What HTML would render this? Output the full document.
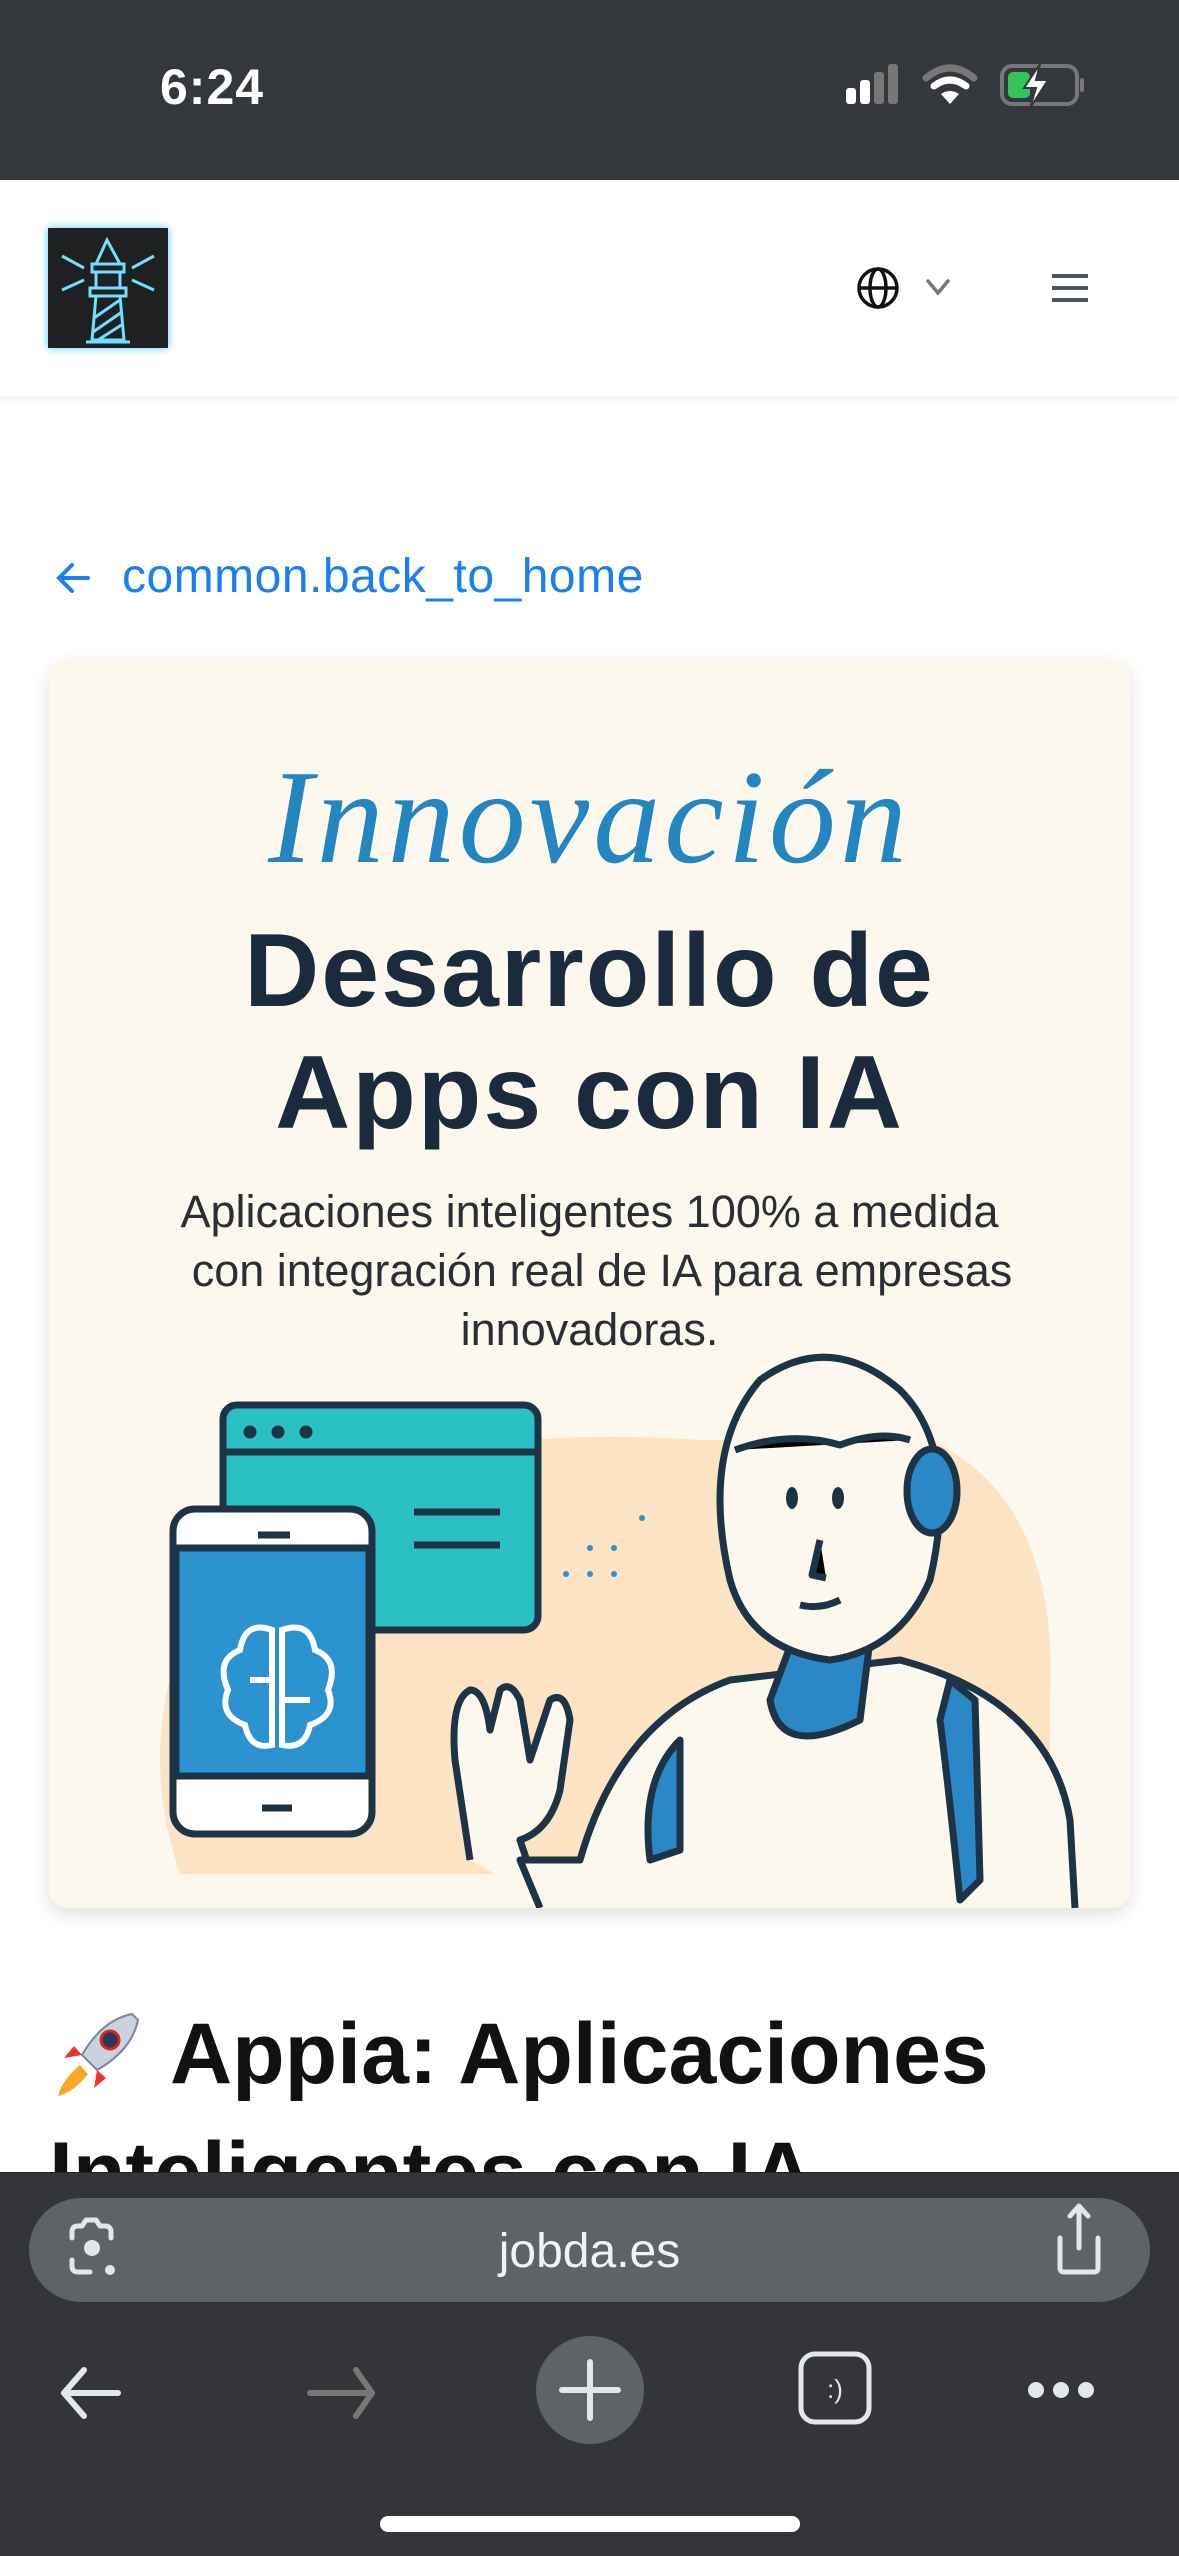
<!DOCTYPE html>
<html><head><meta charset="utf-8">
<style>
*{margin:0;padding:0;box-sizing:border-box}
html,body{width:1179px;height:2556px;overflow:hidden;background:#fff;font-family:"Liberation Sans",sans-serif;position:relative}
.abs{position:absolute}
.status{left:0;top:0;width:1179px;height:180px;background:#34373b}
.time{left:160px;top:58px;color:#fff;font-size:50px;font-weight:bold;letter-spacing:1px}
.header{left:0;top:180px;width:1179px;height:216px;background:#fff;box-shadow:0 3px 6px rgba(0,0,0,0.06)}
.back{left:122px;top:549px;color:#1a7ff0;font-size:48px;letter-spacing:0.5px}
.card{left:49px;top:660px;width:1081px;height:1248px;background:#fdf8ee;border-radius:18px;box-shadow:0 6px 18px rgba(0,0,0,0.13);overflow:hidden}
.ct{position:absolute;width:100%;text-align:center;left:0}
.title{left:170px;top:2005px;font-size:86px;font-weight:bold;color:#111;white-space:nowrap}
.title2{left:49px;top:2124px;font-size:86px;font-weight:bold;color:#111;white-space:nowrap}
.bottom{left:0;top:2172px;width:1179px;height:384px;background:#333538;border-top:1px solid #222}
.pill{left:29px;top:2198px;width:1121px;height:104px;background:#5e6368;border-radius:52px}
.url{left:0;top:2224px;width:1179px;text-align:center;color:#f2f2f2;font-size:48px}
.home{left:380px;top:2516px;width:420px;height:16px;background:#fff;border-radius:8px}
</style></head><body>
<div class="abs status"></div>
<div class="abs time">6:24</div>
<svg class="abs" style="left:840px;top:62px" width="250" height="50" viewBox="0 0 250 50">
<rect x="6" y="26" width="10" height="16" rx="3" fill="#fff"/>
<rect x="20" y="18" width="10" height="24" rx="3" fill="#fff"/>
<rect x="34" y="10" width="10" height="32" rx="3" fill="#777"/>
<rect x="48" y="2" width="10" height="40" rx="3" fill="#777"/>
<path d="M86 16 Q110 -4 134 16" stroke="#777" stroke-width="7" fill="none" stroke-linecap="round"/>
<path d="M94 24 Q110 12 126 24" stroke="#fff" stroke-width="7" fill="none" stroke-linecap="round"/>
<path d="M101 32 L110 42 L119 32 Q110 26 101 32Z" fill="#fff"/>
<rect x="162" y="4" width="75" height="38" rx="10" fill="none" stroke="#777" stroke-width="4"/>
<rect x="168" y="10" width="22" height="26" rx="5" fill="#33c55a"/>
<rect x="240" y="16" width="4" height="14" rx="2" fill="#777"/>
<path d="M200 2 L184 26 L196 26 L190 46 L208 18 L196 18 Z" fill="#fff" stroke="#34373b" stroke-width="2"/>
</svg>
<div class="abs header"></div>
<div class="abs" style="left:48px;top:228px;width:120px;height:120px;background:#1f2022;box-shadow:0 0 8px #4cc9ff"></div>
<svg class="abs" style="left:48px;top:228px" width="120" height="120" viewBox="0 0 120 120" fill="none" stroke="#6fe0ff" stroke-width="3">
<path d="M48 36 L59 12 L72 36 Z"/><rect x="44" y="36" width="32" height="8"/><rect x="48" y="44" width="24" height="16"/><rect x="42" y="60" width="36" height="8"/>
<path d="M48 68 L44 112 L76 112 L72 68"/><path d="M38 114 H82"/><path d="M46 90 L72 72 M45 104 L74 84 M50 112 L75 96"/>
<path d="M36 40 L14 28 M36 52 L14 62 M84 40 L106 28 M84 52 L106 62"/>
</svg>
<svg class="abs" style="left:852px;top:264px" width="240" height="48" viewBox="0 0 240 48" fill="none">
<circle cx="26" cy="24" r="19" stroke="#111" stroke-width="3.5"/>
<ellipse cx="26" cy="24" rx="8" ry="19" stroke="#111" stroke-width="3.5"/>
<path d="M7 24 H45" stroke="#111" stroke-width="3.5"/>
<path d="M76 17 L86 29 L96 17" stroke="#777" stroke-width="3.5" stroke-linecap="round"/>
<path d="M200 12 H236 M200 24 H236 M200 36 H236" stroke="#4a5560" stroke-width="4"/>
</svg>
<svg class="abs" style="left:54px;top:560px" width="40" height="36" viewBox="0 0 40 36" fill="none" stroke="#1a7ff0" stroke-width="4" stroke-linecap="round"><path d="M34 18 H6 M18 5 L5 18 L18 31"/></svg>
<div class="abs back">common.back_to_home</div>
<div class="abs card">
<div class="ct" style="top:80px;font-family:'Liberation Serif',serif;font-style:italic;font-size:134px;color:#2386c0;letter-spacing:4px">Innovación</div>
<div class="ct" style="top:250px;font-size:104px;font-weight:bold;color:#1b2a3d;line-height:122px;letter-spacing:2px">Desarrollo de<br>Apps con IA</div>
<div class="ct" style="top:522px;font-size:45px;color:#2a2f36;line-height:59px">Aplicaciones inteligentes 100% a medida<br>&nbsp;&nbsp;con integración real de IA para empresas<br>innovadoras.</div>
</div>
<svg class="abs" style="left:0;top:0" width="1179" height="1908" viewBox="0 0 1179 1908">
<path d="M180 1874 Q120 1700 240 1530 Q400 1420 700 1440 L930 1440 Q1060 1500 1050 1700 L1050 1874 Z" fill="#fbe3c3"/>
<g stroke="#1d3446" stroke-width="7" stroke-linejoin="round">
<rect x="223" y="1405" width="315" height="225" rx="14" fill="#2bc0c4"/>
<path d="M223 1452 H538" />
<circle cx="250" cy="1432" r="3" fill="#1d3446"/><circle cx="278" cy="1432" r="3" fill="#1d3446"/><circle cx="306" cy="1432" r="3" fill="#1d3446"/>
<path d="M414 1512 H500 M414 1545 H500"/>
<rect x="173" y="1509" width="199" height="325" rx="22" fill="#fff"/>
<rect x="176" y="1548" width="193" height="228" fill="#2a93d0"/>
<path d="M258 1535 H290 M262 1808 H292"/>
<path d="M470 1860 L455 1760 Q450 1700 470 1690 Q485 1690 490 1730 L500 1690 Q510 1680 520 1700 L530 1760 L550 1700 Q565 1690 570 1720 L560 1790 Q550 1830 520 1840 L540 1900" fill="#fdf8ee"/>
<path d="M540 1908 L520 1860 L580 1860 Q620 1720 730 1680 L900 1660 Q1050 1700 1070 1820 L1075 1908" fill="#fdf8ee"/>
<path d="M770 1700 Q780 1760 860 1720 L870 1640 L800 1620 Z" fill="#2a88c6"/>
<path d="M680 1740 Q640 1780 650 1860 L680 1850 Z" fill="#2a88c6"/>
<path d="M950 1680 L975 1700 L980 1880 L960 1900 Q950 1800 940 1720Z" fill="#2a88c6"/>
<path d="M730 1580 Q700 1450 760 1380 Q830 1330 900 1390 Q960 1450 930 1580 Q900 1650 830 1660 Q750 1650 730 1580Z" fill="#fdf8ee"/>
<ellipse cx="932" cy="1491" rx="25" ry="42" fill="#2a88c6"/>
<path d="M735 1450 Q790 1430 840 1445 Q880 1430 910 1440"/>
<path d="M820 1540 L812 1575 L826 1578 M800 1605 Q820 1610 840 1600"/>
</g>
<ellipse cx="792" cy="1498" rx="6" ry="11" fill="#1d3446"/><ellipse cx="838" cy="1498" rx="6" ry="11" fill="#1d3446"/>
<g fill="#2a93d0"><circle cx="642" cy="1518" r="3"/><circle cx="590" cy="1548" r="3"/><circle cx="614" cy="1548" r="3"/><circle cx="566" cy="1574" r="3"/><circle cx="590" cy="1574" r="3"/><circle cx="614" cy="1574" r="3"/></g>
<g stroke="#fff" stroke-width="6" fill="none"><path d="M272 1630 Q245 1620 240 1650 Q215 1660 228 1690 Q218 1715 245 1725 Q250 1750 272 1745 Z"/><path d="M282 1630 Q310 1620 315 1650 Q340 1660 328 1690 Q338 1715 310 1725 Q305 1750 282 1745 Z"/><path d="M250 1680 H272 M285 1700 H310"/></g>
</svg>
<svg class="abs" style="left:52px;top:2010px" width="90" height="90" viewBox="0 0 90 90">
<path d="M80 4 Q50 10 30 45 L45 60 Q80 40 86 10Z" fill="#c9d3de" stroke="#7b8794" stroke-width="2"/>
<circle cx="58" cy="30" r="9" fill="#2a3a55" stroke="#d22" stroke-width="3"/>
<path d="M30 45 L12 48 L22 36 Z M45 60 L42 78 L54 68Z" fill="#e33"/>
<path d="M28 55 Q10 70 6 86 Q22 82 36 64Z" fill="#f9a825"/>
</svg>
<div class="abs title">Appia: Aplicaciones</div>
<div class="abs title2">Inteligentes con IA</div>
<div class="abs bottom"></div>
<div class="abs pill"></div>
<div class="abs url">jobda.es</div>
<svg class="abs" style="left:0;top:2172px" width="1179" height="384" viewBox="0 0 1179 384" fill="none" stroke-linecap="round" stroke-linejoin="round">
<g stroke="#e4e7ea" stroke-width="5">
<path d="M72 66 V60 Q72 54 78 54 H82 L86 48 H96 L100 54 H105 Q111 54 111 60 V66 M72 88 V94 Q72 100 78 100 H90"/>
<path d="M1060 66 V96 Q1060 100 1064 100 H1094 Q1098 100 1098 96 V66 M1079 34 V76 M1070 44 L1079 34 L1088 44"/>
<path d="M118 221 H66 M84 198 L64 221 L84 244" stroke-width="6"/>
<rect x="801" y="182" width="68" height="68" rx="14"/>
</g>
<circle cx="92" cy="76" r="8" fill="#e4e7ea"/><circle cx="110" cy="98" r="5" fill="#e4e7ea"/>
<path d="M310 221 H372 M356 198 L372 221 L356 244" stroke="#777" stroke-width="6"/>
<circle cx="590" cy="218" r="54" fill="#5e6368"/>
<path d="M590 190 V246 M562 218 H618" stroke="#e4e7ea" stroke-width="6"/>
<text x="835" y="226" fill="#e4e7ea" font-size="26" font-family="Liberation Sans" text-anchor="middle">:)</text>
<circle cx="1036" cy="218" r="8" fill="#e4e7ea"/><circle cx="1061" cy="218" r="8" fill="#e4e7ea"/><circle cx="1086" cy="218" r="8" fill="#e4e7ea"/>
</svg>
<div class="abs home"></div>
</body></html>
